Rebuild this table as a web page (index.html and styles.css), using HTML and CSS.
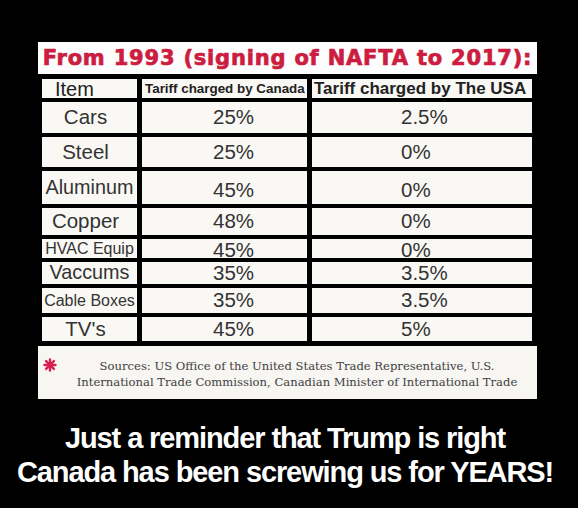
FILE: index.html
```html
<!DOCTYPE html>
<html lang="en">
<head>
    <meta charset="UTF-8">
    <title>NAFTA tariffs</title>
    <link rel="stylesheet" href="styles.css">
</head>
<body>
    <div class="panel">
        <h1 class="title">From 1993 (signing of NAFTA to 2017):</h1>
        <div class="table">
            <div class="cell head item">Item</div>
            <div class="cell head small">Tariff charged by Canada</div>
            <div class="cell head big">Tariff charged by The USA</div>

            <div class="cell name">Cars</div>
            <div class="cell ca">25%</div>
            <div class="cell us">2.5%</div>

            <div class="cell name">Steel</div>
            <div class="cell ca">25%</div>
            <div class="cell us">0%</div>

            <div class="cell name wide">Aluminum</div>
            <div class="cell ca low">45%</div>
            <div class="cell us low">0%</div>

            <div class="cell name">Copper</div>
            <div class="cell ca">48%</div>
            <div class="cell us">0%</div>

            <div class="cell name tiny">HVAC Equip</div>
            <div class="cell ca sunk">45%</div>
            <div class="cell us sunk">0%</div>

            <div class="cell name wide">Vaccums</div>
            <div class="cell ca">35%</div>
            <div class="cell us">3.5%</div>

            <div class="cell name tiny">Cable Boxes</div>
            <div class="cell ca">35%</div>
            <div class="cell us">3.5%</div>

            <div class="cell name">TV's</div>
            <div class="cell ca">45%</div>
            <div class="cell us">5%</div>
        </div>
        <div class="sources">
            <svg class="star" width="14" height="14" viewBox="0 0 14 14">
                <g stroke="#d9204f" stroke-width="2.4" stroke-linecap="round">
                    <line x1="7" y1="1.5" x2="7" y2="12.5"/>
                    <line x1="1.5" y1="7" x2="12.5" y2="7"/>
                    <line x1="3.1" y1="3.1" x2="10.9" y2="10.9"/>
                    <line x1="10.9" y1="3.1" x2="3.1" y2="10.9"/>
                </g>
            </svg>
            <p class="sources-text">Sources: US Office of the United States Trade Representative, U.S.<br>International Trade Commission, Canadian Minister of International Trade</p>
        </div>
    </div>
    <div class="caption">
        Just a reminder that Trump is right<br>
        Canada has been screwing us for YEARS!
    </div>
</body>
</html>
```

FILE: styles.css
```css
body {
    margin: 0;
    background: #000;
    font-family: "Liberation Sans", Arial, sans-serif;
}
.panel {
    width: 499px;
    margin: 42px 0 0 38px;
}
.title {
    margin: 0;
    height: 32px;
    line-height: 33px;
    background: #fdfdfd;
    color: #cc1d40;
    font-family: "DejaVu Sans", sans-serif;
    font-size: 21px;
    font-weight: bold;
    letter-spacing: 0.8px;
    -webkit-text-stroke: 0.7px #cc1d40;
    text-align: center;
    white-space: nowrap;
}
.table {
    display: grid;
    grid-template-columns: 95px 165px 220px;
    grid-template-rows: 19px 31px 30px 33px 27px 19px 22px 25px 24px;
    column-gap: 5px;
    row-gap: 4px;
    padding: 5px 5px 5px 4px;
    background: #000;
}
.cell {
    background: #f9f8f4;
    color: #333;
    font-size: 20.5px;
    line-height: 1;
    display: flex;
    align-items: center;
    white-space: nowrap;
}
.head {
    color: #222;
    font-weight: bold;
}
.item {
    font-weight: normal;
    font-size: 20px;
    padding-left: 13px;
}
.small {
    font-size: 13.4px;
    padding-left: 3px;
}
.big {
    font-size: 17px;
    padding-left: 2px;
}
.name {
    justify-content: center;
    padding-right: 8px;
}
.wide {
    font-size: 19.8px;
    padding-right: 0;
}
.tiny {
    font-size: 16px;
    padding-right: 0;
}
.ca {
    padding-left: 71px;
}
.us {
    padding-left: 89px;
}
.low {
    padding-top: 6px;
}
.sunk {
    padding-top: 3px;
}
.sources {
    display: flex;
    align-items: flex-start;
    height: 53px;
    background: #f7f6f2;
}
.star {
    margin: 12px 0 0 5px;
    flex: none;
}
.sources-text {
    flex: 1;
    margin: 12px 0 0;
    font-family: "DejaVu Serif", serif;
    font-size: 11.6px;
    line-height: 16px;
    color: #404040;
    text-align: center;
    white-space: nowrap;
}
.caption {
    margin-top: 22px;
    padding-right: 8px;
    color: #fff;
    font-size: 29px;
    font-weight: bold;
    line-height: 34px;
    letter-spacing: -1.1px;
    text-align: center;
}
```
